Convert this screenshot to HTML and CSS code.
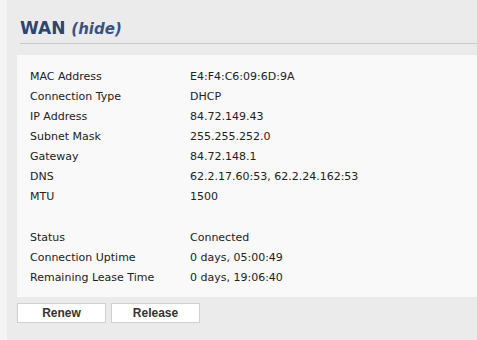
FILE: index.html
```html
<!DOCTYPE html>
<html lang="en">
  <head>
    <meta charset="UTF-8" />
    <title>WAN</title>
    <link rel="stylesheet" href="styles.css">
  </head>
  <body>
    <div class="side"></div>
    <div class="panel">
      <h2 class="judul">WAN <a class="hide" href="#">(hide)</a></h2>
      <div class="kotak">
        <table>
          <tr><td>MAC Address</td><td>E4:F4:C6:09:6D:9A</td></tr>
          <tr><td>Connection Type</td><td>DHCP</td></tr>
          <tr><td>IP Address</td><td>84.72.149.43</td></tr>
          <tr><td>Subnet Mask</td><td>255.255.252.0</td></tr>
          <tr><td>Gateway</td><td>84.72.148.1</td></tr>
          <tr><td>DNS</td><td>62.2.17.60:53, 62.2.24.162:53</td></tr>
          <tr><td>MTU</td><td>1500</td></tr>
          <tr class="kosong"><td></td><td></td></tr>
          <tr><td>Status</td><td>Connected</td></tr>
          <tr><td>Connection Uptime</td><td>0 days, 05:00:49</td></tr>
          <tr><td>Remaining Lease Time</td><td>0 days, 19:06:40</td></tr>
        </table>
      </div>
      <div class="tombol">
        <button>Renew</button>
        <button>Release</button>
      </div>
    </div>
  </body>
</html>
```

FILE: styles.css
```css
* { box-sizing: border-box }
body {
  margin: 0;
  display: flex;
  height: 340px;
  background: #ebebeb;
  font-family: "DejaVu Sans", Tahoma, sans-serif;
  font-size: 11px;
  color: #222;
  overflow: hidden;
}
.side {
  width: 7px;
  background: #f4f4f4;
}
.panel {
  flex: 1;
  padding: 0 0 0 10px;
}
.judul {
  margin: 0 0 11px 3px;
  padding: 19px 0 5px 0;
  border-bottom: 1px solid #c9c9c9;
  font-size: 17px;
  font-weight: bold;
  color: #2f4470;
  line-height: 18px;
}
.hide {
  color: #3b5180;
  font-style: italic;
  font-size: 15px;
  text-decoration: none;
}
.kotak {
  background: #f9f9f9;
  padding: 12px 0 9px 13px;
}
table { border-collapse: collapse }
td {
  padding: 0;
  height: 20px;
  line-height: 20px;
}
td:first-child { width: 160px }
.kosong td { height: 21px }
.tombol {
  display: flex;
  gap: 5px;
  margin-top: 6px;
}
button {
  width: 89px;
  height: 20px;
  padding: 0;
  background: #fff;
  border: 1px solid #d0d0d0;
  font-family: "Liberation Sans", Arial, sans-serif;
  font-size: 12px;
  font-weight: bold;
  color: #333;
}
```
